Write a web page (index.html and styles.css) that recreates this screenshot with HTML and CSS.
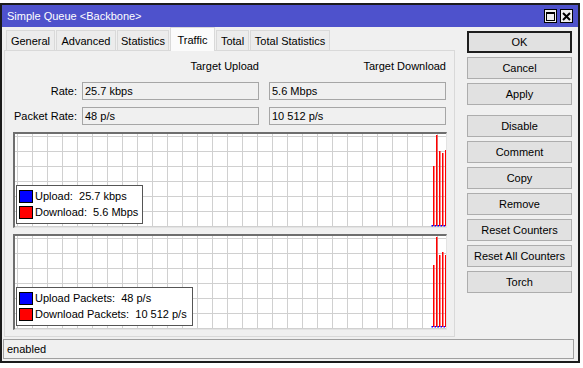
FILE: index.html
```html
<!DOCTYPE html>
<html>
<head>
<meta charset="utf-8">
<link rel="stylesheet" href="styles.css">
</head>
<body>
<div class="window">
  <div class="titlebar">
    <span class="title">Simple Queue &lt;Backbone&gt;</span>
    <div class="tbtns">
      <span class="tbtn"><svg width="9" height="9" viewBox="0 0 9 9"><rect x="0.5" y="0.5" width="8" height="8" fill="none" stroke="#000"/><rect x="0" y="0" width="9" height="2" fill="#000"/></svg></span>
      <span class="tbtn"><svg width="9" height="9" viewBox="0 0 9 9"><path d="M1 1L8 8M8 1L1 8" stroke="#000" stroke-width="2"/></svg></span>
    </div>
  </div>
  <div class="content">
    <div class="main">
      <div class="left">
        <div class="tabs">
          <div class="tab t-general">General</div>
          <div class="tab t-advanced">Advanced</div>
          <div class="tab t-statistics">Statistics</div>
          <div class="tab t-traffic sel">Traffic</div>
          <div class="tab t-total">Total</div>
          <div class="tab t-totalstat">Total Statistics</div>
        </div>
        <div class="panel">
          <div class="fields">
            <div class="hdr-empty"></div>
            <div class="hdr">Target Upload</div>
            <div class="hdr c3">Target Download</div>
            <div class="lbl">Rate:</div>
            <div class="field">25.7 kbps</div>
            <div class="field c3">5.6 Mbps</div>
            <div class="lbl">Packet Rate:</div>
            <div class="field">48 p/s</div>
            <div class="field c3">10 512 p/s</div>
          </div>
          <div class="graph g1">
            <svg class="bars" width="431" height="93" viewBox="0 0 431 93">
              <rect x="418" y="32" width="1.5" height="60" fill="#ff0000"/>
              <rect x="421" y="1" width="1.5" height="91" fill="#ff0000"/>
              <rect x="424" y="17" width="1.5" height="75" fill="#ff0000"/>
              <rect x="427" y="19" width="1.5" height="73" fill="#ff0000"/>
              <rect x="430" y="16" width="1.5" height="76" fill="#ff0000"/>
              <rect x="416.5" y="91" width="1.5" height="1.5" fill="#0000ff"/>
              <rect x="419.5" y="91" width="1.5" height="1.5" fill="#0000ff"/>
              <rect x="422.5" y="91" width="1.5" height="1.5" fill="#0000ff"/>
              <rect x="425.5" y="91" width="1.5" height="1.5" fill="#0000ff"/>
              <rect x="428.5" y="91" width="1.5" height="1.5" fill="#0000ff"/>
            </svg>
            <div class="legend l1">
              <div class="lrow"><span class="sw blue"></span><span>Upload:&nbsp; 25.7 kbps</span></div>
              <div class="lrow"><span class="sw red"></span><span>Download:&nbsp; 5.6 Mbps</span></div>
            </div>
          </div>
          <div class="graph g2">
            <svg class="bars" width="431" height="93" viewBox="0 0 431 93">
              <rect x="418" y="29" width="1.5" height="62" fill="#ff0000"/>
              <rect x="421" y="1" width="1.5" height="90" fill="#ff0000"/>
              <rect x="424" y="19" width="1.5" height="72" fill="#ff0000"/>
              <rect x="427" y="16" width="1.5" height="75" fill="#ff0000"/>
              <rect x="430" y="19" width="1.5" height="72" fill="#ff0000"/>
              <rect x="416.5" y="90" width="1.5" height="1.5" fill="#0000ff"/>
              <rect x="419.5" y="90" width="1.5" height="1.5" fill="#0000ff"/>
              <rect x="422.5" y="90" width="1.5" height="1.5" fill="#0000ff"/>
              <rect x="425.5" y="90" width="1.5" height="1.5" fill="#0000ff"/>
              <rect x="428.5" y="90" width="1.5" height="1.5" fill="#0000ff"/>
            </svg>
            <div class="legend l2">
              <div class="lrow"><span class="sw blue"></span><span>Upload Packets:&nbsp; 48 p/s</span></div>
              <div class="lrow"><span class="sw red"></span><span>Download Packets:&nbsp; 10 512 p/s</span></div>
            </div>
          </div>
        </div>
      </div>
      <div class="buttons">
        <div class="btn def">OK</div>
        <div class="btn">Cancel</div>
        <div class="btn group-end">Apply</div>
        <div class="btn">Disable</div>
        <div class="btn">Comment</div>
        <div class="btn">Copy</div>
        <div class="btn">Remove</div>
        <div class="btn">Reset Counters</div>
        <div class="btn">Reset All Counters</div>
        <div class="btn">Torch</div>
      </div>
    </div>
    <div class="status">enabled</div>
  </div>
</div>
</body>
</html>
```

FILE: styles.css
```css
html, body {
  margin: 0;
  padding: 0;
}
body {
  width: 583px;
  height: 368px;
  overflow: hidden;
  background: #ffffff;
  font-family: "Liberation Sans", Arial, sans-serif;
  font-size: 11px;
  color: #000;
}
.window {
  margin-top: 3px;
  width: 580px;
  height: 360px;
  box-sizing: border-box;
  border: 2px solid #1b1b1b;
  background: #f0f0f0;
  display: flex;
  flex-direction: column;
}
.titlebar {
  height: 22px;
  flex: none;
  background: #4e52cc;
  color: #fff;
  display: flex;
  align-items: center;
  justify-content: space-between;
  padding: 0 5px;
  font-size: 11px;
}
.tbtns {
  display: flex;
  gap: 3px;
}
.tbtn {
  width: 13px;
  height: 14px;
  box-sizing: border-box;
  border: 1px solid #000;
  background: #f0f0f0;
  display: flex;
  align-items: center;
  justify-content: center;
}
.tbtn svg { display: block; }
.content {
  display: flex;
  flex-direction: column;
}
.main {
  display: flex;
  height: 310px;
}
.left {
  margin-left: 2px;
  width: 451px;
}
.tabs {
  display: flex;
  gap: 1px;
  padding-left: 2px;
  height: 23px;
  align-items: flex-end;
}
.tab {
  height: 20px;
  box-sizing: border-box;
  border: 1px solid #d9d9d9;
  border-bottom: none;
  background: #ececec;
  display: flex;
  align-items: center;
  justify-content: center;
  white-space: nowrap;
}
.tab.sel {
  height: 24px;
  margin-bottom: -1px;
  background: #fbfbfb;
  position: relative;
  z-index: 1;
}
.t-general { width: 49px; }
.t-advanced { width: 60px; }
.t-statistics { width: 52px; }
.t-traffic { width: 45px; }
.t-total { width: 33px; }
.t-totalstat { width: 80px; }
.panel {
  height: 287px;
  box-sizing: border-box;
  border: 1px solid #d9d9d9;
  background: #f0f0f0;
  padding-top: 9px;
}
.fields {
  display: grid;
  grid-template-columns: 77px 177px 187px;
  grid-template-rows: 22px 25px 18px;
}
.c3 { margin-left: 10px; }
.hdr {
  text-align: right;
  line-height: 13px;
  white-space: nowrap;
}
.lbl {
  text-align: right;
  padding-right: 5px;
  line-height: 18px;
  white-space: nowrap;
}
.field {
  height: 18px;
  box-sizing: border-box;
  border: 1px solid #a6a6a6;
  background: #f0f0f0;
  padding-left: 2px;
  line-height: 16px;
  white-space: nowrap;
}
.graph {
  position: relative;
  margin-left: 8px;
  width: 434px;
  height: 96px;
  box-sizing: border-box;
  border-top: 2px solid #6e6e6e;
  border-left: 2px solid #6e6e6e;
  border-right: 1px solid #e3e3e3;
  border-bottom: 1px solid #e3e3e3;
  background-color: #fff;
  background-image:
    linear-gradient(to right, #d0d0d0 1px, transparent 1px),
    linear-gradient(to bottom, #d0d0d0 1px, transparent 1px);
  background-size: 15px 15px, 15px 15px;
  background-position: 2px 0, 0 2px;
}
.g1 { margin-top: 7px; }
.g2 { margin-top: 6px; }
.bars {
  position: absolute;
  left: 0;
  top: 0;
  display: block;
}
.legend {
  position: absolute;
  left: 1px;
  top: 51px;
  height: 39px;
  box-sizing: border-box;
  border: 1px solid #555;
  background: #fff;
  padding: 2px 0 0 2px;
}
.l1 { width: 127px; }
.l2 { width: 177px; }
.lrow {
  display: flex;
  align-items: center;
  gap: 2px;
  height: 16px;
  white-space: nowrap;
}
.sw {
  flex: none;
  width: 14px;
  height: 13px;
  box-sizing: border-box;
  border: 1px solid #000;
}
.sw.blue { background: #0000ff; }
.sw.red { background: #ff0000; }
.buttons {
  margin-left: 12px;
  padding-top: 4px;
  width: 105px;
  display: flex;
  flex-direction: column;
  gap: 4px;
}
.btn {
  height: 22px;
  box-sizing: border-box;
  border: 1px solid #adadad;
  background: #e1e1e1;
  text-align: center;
  line-height: 20px;
  white-space: nowrap;
}
.btn.def {
  border: 2px solid #1e1e1e;
  line-height: 18px;
}
.btn.group-end { margin-bottom: 6px; }
.status {
  margin: 2px 0 0 1px;
  width: 571px;
  height: 20px;
  box-sizing: border-box;
  border: 1px solid #a0a0a0;
  padding-left: 3px;
  line-height: 18px;
}
```
